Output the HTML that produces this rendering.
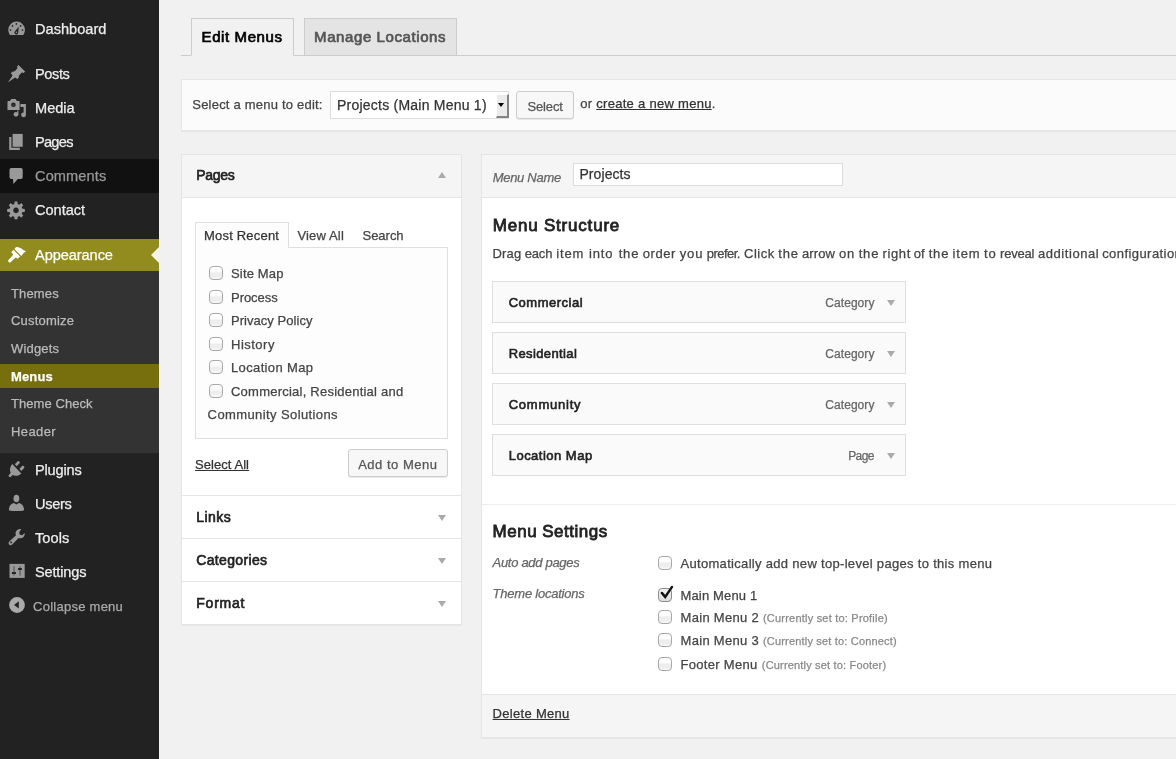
<!DOCTYPE html>
<html lang="en">
<head>
<meta charset="utf-8">
<title>Menus</title>
<style>
*{box-sizing:border-box;margin:0;padding:0}
html,body{width:1176px;height:759px;overflow:hidden;background:#f1f1f1;font-family:"Liberation Sans",sans-serif;font-size:13px;color:#444}
.abs{position:absolute}
.t{position:absolute;white-space:nowrap;-webkit-text-stroke:0.25px}
#txt{position:absolute;left:0;top:0;width:1176px;height:759px;overflow:hidden;will-change:transform}
#side{position:absolute;left:0;top:0;width:159px;height:759px;background:#222}
.box{position:absolute;background:#fff;border:1px solid #e5e5e5;box-shadow:0 1px 1px rgba(0,0,0,.04)}
.cb{position:absolute;width:14px;height:14px;border:1px solid #a8a8a8;border-radius:4px;background:linear-gradient(#fff 0%,#fdfdfd 35%,#ececec 55%,#efefef 80%,#fafafa 100%)}
.item{position:absolute;left:492px;width:414px;height:42px;background:#fafafa;border:1px solid #dfdfdf}
.arr{position:absolute;width:0;height:0;border-left:4px solid transparent;border-right:4px solid transparent}
.btn{position:absolute;border:1px solid #ccc;border-radius:3px;background:#f7f7f7;box-shadow:0 1px 0 rgba(0,0,0,.08)}
a{color:#333;text-decoration:underline}
</style>
</head>
<body>
<div id="side">
<div class="abs" style="left:0;top:159px;width:159px;height:34px;background:#111"></div>
<div class="abs" style="left:0;top:239px;width:159px;height:32px;background:#928b1d"></div>
<div class="abs" style="left:151px;top:247px;width:0;height:0;border-top:8px solid transparent;border-bottom:8px solid transparent;border-right:8px solid #f4f3e8"></div>
<div class="abs" style="left:0;top:271px;width:159px;height:182px;background:#333"></div>
<div class="abs" style="left:0;top:364px;width:159px;height:24px;background:#776f0d"></div>
<svg class="abs" style="left:0;top:0" width="159" height="759" viewBox="0 0 159 759">
<g fill="#999">
<!-- dashboard -->
<path d="M9.9 35.1 C8.9 33.6 8.3 31.8 8.3 29.8 A8.3 8.3 0 0 1 24.9 29.8 C24.9 31.8 24.3 33.6 23.3 35.1Z"/>
<g fill="#222"><circle cx="10.5" cy="30" r=".85"/><circle cx="12.5" cy="25.9" r=".85"/><circle cx="16.4" cy="23.9" r=".85"/><circle cx="20.6" cy="25.9" r=".85"/><circle cx="22.5" cy="30" r=".85"/>
<path d="M18.8 26.6 L18.2 32.6 A1.9 1.9 0 1 1 15 31.2Z"/></g>
<circle cx="16.4" cy="32.2" r=".8"/>
<!-- posts pin -->
<path d="M7.9 82.4 L12.6 75.6 L10.9 73.2 L12.3 71.8 Q14 71.8 15 71 L17.4 68.3 Q17.6 67.3 17 66.5 L18.4 65.1 L25.1 71.6 L23.7 73 Q22.8 72.4 21.9 72.6 L19.4 75 Q18.6 76.2 18.8 77.4 L17.4 78.9 L15 77.5Z"/>
<!-- media -->
<path d="M7.5 101.6 Q7.5 100.9 8.2 100.9 L10 100.9 L11.3 98.9 L15.6 98.9 L16.9 100.9 L18.9 100.9 Q19.6 100.9 19.6 101.6 L19.6 110 L7.5 110Z"/>
<circle cx="13.4" cy="104.8" r="2.3" fill="#222"/><circle cx="13.4" cy="104.8" r=".9" fill="#444"/>
<path d="M20.4 103.9 L25.9 103.9 L25.9 114.9 A2.4 2.4 0 1 1 23.6 112.5 L23.6 107 L20.4 107Z"/>
<circle cx="16" cy="114.3" r="2.4"/><path d="M17.4 110.5 L18.4 110.5 L18.4 114.3 L17 114.3Z"/>
<!-- pages -->
<rect x="12.6" y="133.9" width="10.1" height="12.9"/>
<path d="M9.2 137 L11.4 137 L11.4 147.8 L19.8 147.8 L19.8 149.9 L9.2 149.9Z"/>
<!-- comments -->
<path d="M11.3 167.9 L20.9 167.9 Q22.7 167.9 22.7 169.7 L22.7 177.2 Q22.7 179 20.9 179 L17.8 179 L13.4 183.9 L13 179 L11.3 179 Q9.5 179 9.5 177.2 L9.5 169.7 Q9.5 167.9 11.3 167.9Z"/>
<!-- gear -->
<path fill-rule="evenodd" d="M14.4 203.9 L14.5 201.6 L17.5 201.6 L17.6 203.9 L19.4 204.7 L21.2 203.1 L23.3 205.2 L21.7 207.0 L22.5 208.8 L24.8 208.9 L24.8 211.9 L22.5 212.0 L21.7 213.8 L23.3 215.6 L21.2 217.7 L19.4 216.1 L17.6 216.9 L17.5 219.2 L14.5 219.2 L14.4 216.9 L12.6 216.1 L10.8 217.7 L8.7 215.6 L10.3 213.8 L9.5 212.0 L7.2 211.9 L7.2 208.9 L9.5 208.8 L10.3 207.0 L8.7 205.2 L10.8 203.1 L12.6 204.7Z M16 207.6 a2.8 2.8 0 1 0 0.01 0Z"/>
<!-- plugins -->
<path d="M12.3 464.1 L21.3 473.4 C19 475.8 15.4 476.4 12.6 475 L10.9 476.7 A1.3 1.3 0 0 1 9 474.8 L10.7 473.1 C9.3 470.3 9.9 466.6 12.3 464.1Z"/>
<path d="M14.8 464.3 L17.6 461.2 Q18.6 460.8 19.4 461.6 Q20.1 462.5 19.6 463.3 L16.8 466.3Z"/>
<path d="M19.4 468.9 L22.2 465.8 Q23.2 465.4 24 466.2 Q24.7 467.1 24.2 467.9 L21.4 470.9Z"/>
<!-- users -->
<ellipse cx="16.4" cy="498.5" rx="2.9" ry="3.75"/>
<path d="M8.9 510.2 C8.9 505.5 11.4 503.6 14 502.9 L16.4 504.6 L18.8 502.9 C21.5 503.6 24.1 505.5 24.1 510.2 C20 511.4 13 511.4 8.9 510.2Z"/>
<!-- tools -->
<path fill-rule="evenodd" d="M21.3 529 C19 528.6 16.6 529.6 15.8 531.8 C15.4 533 15.5 534.2 16 535.2 L9.3 541.4 A2 2 0 0 0 12.2 544.6 L18.6 538 C19.6 538.4 20.8 538.4 22 538 C24 537.2 25 535 24.7 532.9 L22.2 535.3 L19.8 534.7 L19.2 532.3Z M11.1 541.5 a.9 .9 0 1 0 .01 0Z"/>
<!-- settings -->
<rect x="9.5" y="563.9" width="15.2" height="14" />
<rect x="13.2" y="566.3" width="1.6" height="9.3" fill="#6a6a6a"/><rect x="19.2" y="566.3" width="1.7" height="9.3" fill="#6a6a6a"/>
<rect x="11.9" y="572" width="4.1" height="2" rx=".5" fill="#222"/><rect x="18" y="568" width="3.9" height="2" rx=".5" fill="#222"/>
</g>
<!-- appearance brush -->
<g fill="#fff">
<path d="M8.4 260 L12.6 255.6 L15 258 L10.6 262.2 A1.6 1.6 0 0 1 8.4 260Z"/>
<path d="M11.1 252 L13.6 250.1 L20.1 256.5 L17.6 258.8 L15.8 257.4 L14.6 258.4 L12.2 256 L13.2 254.6Z"/>
<path d="M14.4 249 C15 248 16 247.2 17 247.1 C20 247.3 22.6 249.6 25.9 251.4 C24 252.2 22.8 254 21.3 255.9Z"/>
</g>
<!-- collapse -->
<circle cx="17" cy="605" r="7.9" fill="#aaa"/>
<path d="M14 604.9 L18.8 601.3 L18.8 608.6Z" fill="#222"/>
</svg>
</div>
<!-- tabs -->
<div class="abs" style="left:181px;top:55px;width:995px;height:1px;background:#ccc"></div>
<div class="abs" style="left:191px;top:18px;width:103px;height:38px;border:1px solid #ccc;border-bottom:1px solid #f1f1f1;background:#f1f1f1"></div>
<div class="abs" style="left:304px;top:18px;width:153px;height:38px;border:1px solid #ccc;background:#e4e4e4"></div>
<!-- select bar -->
<div class="box" style="left:181px;top:79px;width:1000px;height:52px;background:#fbfbfb"></div>
<div class="abs" style="left:330px;top:91px;width:179px;height:28px;border:1px solid #ddd;background:#fff"></div>
<div class="abs" style="left:496px;top:94px;width:13px;height:24px;background:#ebebeb;border-top:1px solid #fff;border-left:1px solid #fff;border-right:2px solid #848484;border-bottom:2px solid #848484"></div>
<div class="arr" style="left:498px;top:103px;border-left-width:3px;border-right-width:3px;border-top:4px solid #000"></div>
<div class="btn" style="left:516px;top:91px;width:58px;height:28px"></div>
<!-- left accordion -->
<div class="box" style="left:181px;top:154px;width:281px;height:471px"></div>
<div class="abs" style="left:182px;top:155px;width:279px;height:42px;background:#f5f5f5"></div>
<div class="abs" style="left:182px;top:197px;width:279px;height:1px;background:#e5e5e5"></div>
<div class="arr" style="left:438px;top:172px;border-bottom:6px solid #aaa"></div>
<div class="abs" style="left:195px;top:247px;width:253px;height:192px;border:1px solid #dfdfdf;background:#fdfdfd"></div>
<div class="abs" style="left:195px;top:222px;width:94px;height:26px;border:1px solid #dfdfdf;border-bottom:none;background:#fdfdfd"></div>
<div class="cb" style="left:209px;top:266px"></div>
<div class="cb" style="left:209px;top:290px"></div>
<div class="cb" style="left:209px;top:313px"></div>
<div class="cb" style="left:209px;top:337px"></div>
<div class="cb" style="left:209px;top:360px"></div>
<div class="cb" style="left:209px;top:384px"></div>
<div class="btn" style="left:348px;top:449px;width:100px;height:28px"></div>
<div class="abs" style="left:182px;top:495px;width:279px;height:1px;background:#e5e5e5"></div>
<div class="arr" style="left:438px;top:515px;border-top:6px solid #aaa"></div>
<div class="abs" style="left:182px;top:538px;width:279px;height:1px;background:#e5e5e5"></div>
<div class="arr" style="left:438px;top:558px;border-top:6px solid #aaa"></div>
<div class="abs" style="left:182px;top:581px;width:279px;height:1px;background:#e5e5e5"></div>
<div class="arr" style="left:438px;top:601px;border-top:6px solid #aaa"></div>
<!-- right panel -->
<div class="box" style="left:481px;top:154px;width:700px;height:584px"></div>
<div class="abs" style="left:482px;top:155px;width:694px;height:42px;background:#f5f5f5"></div>
<div class="abs" style="left:482px;top:197px;width:694px;height:1px;background:#e5e5e5"></div>
<div class="abs" style="left:573px;top:163px;width:270px;height:23px;border:1px solid #ddd;background:#fff"></div>
<div class="item" style="top:281px"></div><div class="arr" style="left:887px;top:300px;border-top:6px solid #aaa"></div>
<div class="item" style="top:332px"></div><div class="arr" style="left:887px;top:351px;border-top:6px solid #aaa"></div>
<div class="item" style="top:383px"></div><div class="arr" style="left:887px;top:402px;border-top:6px solid #aaa"></div>
<div class="item" style="top:434px"></div><div class="arr" style="left:887px;top:453px;border-top:6px solid #aaa"></div>
<div class="abs" style="left:482px;top:504px;width:694px;height:1px;background:#eee"></div>
<div class="cb" style="left:658px;top:556px"></div>
<div class="cb" style="left:658px;top:588px;border-color:#8c8c8c;background:linear-gradient(#f4f4f4,#dcdcdc)"></div>
<svg class="abs" style="left:656px;top:584px" width="20" height="20" viewBox="0 0 20 20"><path d="M5.8 8.9 L9.2 12.9 L16 2.9" fill="none" stroke="#111" stroke-width="2.4" stroke-linecap="round" stroke-linejoin="miter"/></svg>
<div class="cb" style="left:658px;top:610px"></div>
<div class="cb" style="left:658px;top:633px"></div>
<div class="cb" style="left:658px;top:657px"></div>
<div class="abs" style="left:482px;top:694px;width:694px;height:43px;background:#f5f5f5;border-top:1px solid #e5e5e5"></div>
<div id="txt">
<div class="t" style="left:35px;top:20px;font-size:14.6px;color:#eee;line-height:18px;letter-spacing:0.01px;">Dashboard</div>
<div class="t" style="left:35px;top:65px;font-size:14.6px;color:#eee;line-height:18px;letter-spacing:-0.40px;">Posts</div>
<div class="t" style="left:35px;top:99px;font-size:14.6px;color:#eee;line-height:18px;letter-spacing:-0.01px;">Media</div>
<div class="t" style="left:34.9px;top:133px;font-size:14.6px;color:#eee;line-height:18px;letter-spacing:-0.70px;">Pages</div>
<div class="t" style="left:35px;top:167px;font-size:14.6px;color:#eee;line-height:18px;color:#999;letter-spacing:0.09px;">Comments</div>
<div class="t" style="left:35px;top:201px;font-size:14.6px;color:#eee;line-height:18px;letter-spacing:-0.03px;">Contact</div>
<div class="t" style="left:35px;top:246px;font-size:14.6px;color:#eee;line-height:18px;color:#fff;letter-spacing:-0.08px;">Appearance</div>
<div class="t" style="left:11px;top:285px;font-size:13px;color:#bbb;line-height:18px;letter-spacing:0.15px;">Themes</div>
<div class="t" style="left:11px;top:312px;font-size:13px;color:#bbb;line-height:18px;letter-spacing:0.20px;">Customize</div>
<div class="t" style="left:11px;top:340px;font-size:13px;color:#bbb;line-height:18px;letter-spacing:0.17px;">Widgets</div>
<div class="t" style="left:11px;top:368px;font-size:13px;color:#bbb;line-height:18px;color:#fff;font-weight:bold;letter-spacing:0.13px;">Menus</div>
<div class="t" style="left:11px;top:395px;font-size:13px;color:#bbb;line-height:18px;letter-spacing:0.06px;">Theme Check</div>
<div class="t" style="left:11px;top:423px;font-size:13px;color:#bbb;line-height:18px;letter-spacing:0.39px;">Header</div>
<div class="t" style="left:35px;top:461px;font-size:14.6px;color:#eee;line-height:18px;letter-spacing:-0.18px;">Plugins</div>
<div class="t" style="left:35px;top:495px;font-size:14.6px;color:#eee;line-height:18px;letter-spacing:-0.30px;">Users</div>
<div class="t" style="left:35px;top:529px;font-size:14.6px;color:#eee;line-height:18px;letter-spacing:0.06px;">Tools</div>
<div class="t" style="left:35px;top:563px;font-size:14.6px;color:#eee;line-height:18px;letter-spacing:-0.18px;">Settings</div>
<div class="t" style="left:33px;top:598px;font-size:13px;color:#aaa;line-height:18px;letter-spacing:0.26px;">Collapse menu</div>
<div class="t" style="left:201.6px;top:28px;font-size:15px;-webkit-text-stroke:0.7px #000;color:#000;line-height:18px;letter-spacing:0.59px;">Edit Menus</div>
<div class="t" style="left:314.1px;top:28px;font-size:15px;-webkit-text-stroke:0.7px #555;color:#555;line-height:18px;letter-spacing:0.59px;">Manage Locations</div>
<div class="t" style="left:192.3px;top:97px;line-height:16px;letter-spacing:0.21px;">Select a menu to edit:</div>
<div class="t" style="left:337px;top:96px;font-size:14px;color:#333;line-height:18px;letter-spacing:0.23px;">Projects (Main Menu 1)</div>
<div class="t" style="left:527.5px;top:99px;line-height:16px;color:#555;letter-spacing:-0.15px;">Select</div>
<div class="t" style="left:580.2px;top:96px;line-height:16px;letter-spacing:0.29px;">or <a>create a new menu</a>.</div>
<div class="t" style="left:196.3px;top:167px;font-size:14px;-webkit-text-stroke:0.65px #222;color:#222;line-height:16px;letter-spacing:-0.28px;">Pages</div>
<div class="t" style="left:204px;top:228px;line-height:16px;color:#333;letter-spacing:0.20px;">Most Recent</div>
<div class="t" style="left:297.5px;top:228px;line-height:16px;letter-spacing:0.14px;">View All</div>
<div class="t" style="left:362.5px;top:228px;line-height:16px;letter-spacing:-0.02px;">Search</div>
<div class="t" style="left:231px;top:266px;line-height:16px;letter-spacing:0.16px;">Site Map</div>
<div class="t" style="left:231px;top:290px;line-height:16px;letter-spacing:-0.04px;">Process</div>
<div class="t" style="left:231px;top:313px;line-height:16px;letter-spacing:0.04px;">Privacy Policy</div>
<div class="t" style="left:231px;top:337px;line-height:16px;letter-spacing:0.49px;">History</div>
<div class="t" style="left:231px;top:360px;line-height:16px;letter-spacing:0.36px;">Location Map</div>
<div class="t" style="left:231px;top:384px;line-height:16px;letter-spacing:0.23px;">Commercial, Residential and</div>
<div class="t" style="left:207.6px;top:407px;line-height:16px;letter-spacing:0.40px;">Community Solutions</div>
<div class="t" style="left:195px;top:457px;line-height:16px;letter-spacing:0.06px;"><a>Select All</a></div>
<div class="t" style="left:358.2px;top:457px;line-height:16px;color:#555;letter-spacing:0.51px;">Add to Menu</div>
<div class="t" style="left:196.3px;top:509px;font-size:14px;-webkit-text-stroke:0.65px #222;color:#222;line-height:16px;letter-spacing:0.43px;">Links</div>
<div class="t" style="left:196.3px;top:552px;font-size:14px;-webkit-text-stroke:0.65px #222;color:#222;line-height:16px;letter-spacing:0.34px;">Categories</div>
<div class="t" style="left:196.3px;top:595px;font-size:14px;-webkit-text-stroke:0.65px #222;color:#222;line-height:16px;letter-spacing:0.77px;">Format</div>
<div class="t" style="left:492.7px;top:170px;font-style:italic;color:#666;line-height:16px;letter-spacing:-0.29px;">Menu Name</div>
<div class="t" style="left:579.4px;top:165px;font-size:14px;color:#333;line-height:18px;letter-spacing:0.09px;">Projects</div>
<div class="t" style="left:492.7px;top:216px;font-size:17px;-webkit-text-stroke:0.8px #222;color:#222;line-height:20px;letter-spacing:0.80px;">Menu Structure</div>
<div class="t" style="left:492.5px;top:246px;line-height:16px;letter-spacing:0.17px;">Drag</div>
<div class="t" style="left:524.7px;top:246px;line-height:16px;letter-spacing:-0.17px;">each</div>
<div class="t" style="left:556.3px;top:246px;line-height:16px;letter-spacing:0.80px;">item</div>
<div class="t" style="left:589.1px;top:246px;line-height:16px;letter-spacing:0.80px;">into</div>
<div class="t" style="left:618.7px;top:246px;line-height:16px;letter-spacing:0.80px;">the</div>
<div class="t" style="left:642.8px;top:246px;line-height:16px;letter-spacing:0.56px;">order</div>
<div class="t" style="left:679.8px;top:246px;line-height:16px;letter-spacing:0.80px;">you</div>
<div class="t" style="left:706.8px;top:246px;line-height:16px;letter-spacing:-0.53px;">prefer.</div>
<div class="t" style="left:744px;top:246px;line-height:16px;letter-spacing:0.51px;">Click</div>
<div class="t" style="left:778.3px;top:246px;line-height:16px;letter-spacing:0.80px;">the</div>
<div class="t" style="left:802px;top:246px;line-height:16px;letter-spacing:0.12px;">arrow</div>
<div class="t" style="left:838.9px;top:246px;line-height:16px;letter-spacing:0.80px;">on</div>
<div class="t" style="left:858.7px;top:246px;line-height:16px;letter-spacing:0.80px;">the</div>
<div class="t" style="left:882.5px;top:246px;line-height:16px;letter-spacing:0.63px;">right</div>
<div class="t" style="left:913.8px;top:246px;line-height:16px;letter-spacing:-0.04px;">of</div>
<div class="t" style="left:928.7px;top:246px;line-height:16px;letter-spacing:0.80px;">the</div>
<div class="t" style="left:952.6px;top:246px;line-height:16px;letter-spacing:0.80px;">item</div>
<div class="t" style="left:984px;top:246px;line-height:16px;letter-spacing:0.80px;">to</div>
<div class="t" style="left:1000.1px;top:246px;line-height:16px;letter-spacing:-0.22px;">reveal</div>
<div class="t" style="left:1037.9px;top:246px;line-height:16px;letter-spacing:0.57px;">additional</div>
<div class="t" style="left:1102.2px;top:246px;line-height:16px;letter-spacing:0.43px;">configuration options.</div>
<div class="t" style="left:508.7px;top:295px;font-size:13px;color:#222;line-height:16px;-webkit-text-stroke:0.6px #222;letter-spacing:0.51px;">Commercial</div>
<div class="t" style="left:825.3px;top:295px;font-size:12px;color:#666;line-height:16px;letter-spacing:0.06px;">Category</div>
<div class="t" style="left:508.7px;top:346px;font-size:13px;color:#222;line-height:16px;-webkit-text-stroke:0.6px #222;letter-spacing:0.38px;">Residential</div>
<div class="t" style="left:825.3px;top:346px;font-size:12px;color:#666;line-height:16px;letter-spacing:0.06px;">Category</div>
<div class="t" style="left:508.7px;top:397px;font-size:13px;color:#222;line-height:16px;-webkit-text-stroke:0.6px #222;letter-spacing:0.77px;">Community</div>
<div class="t" style="left:825.3px;top:397px;font-size:12px;color:#666;line-height:16px;letter-spacing:0.06px;">Category</div>
<div class="t" style="left:508.7px;top:448px;font-size:13px;color:#222;line-height:16px;-webkit-text-stroke:0.6px #222;letter-spacing:0.49px;">Location Map</div>
<div class="t" style="left:848.2px;top:448px;font-size:12px;color:#666;line-height:16px;letter-spacing:-0.61px;">Page</div>
<div class="t" style="left:492.6px;top:522px;font-size:17px;-webkit-text-stroke:0.8px #222;color:#222;line-height:20px;letter-spacing:0.49px;">Menu Settings</div>
<div class="t" style="left:492.6px;top:555px;font-style:italic;color:#666;line-height:16px;letter-spacing:-0.31px;">Auto add pages</div>
<div class="t" style="left:680.5px;top:556px;line-height:16px;letter-spacing:0.31px;">Automatically add new top-level pages to this menu</div>
<div class="t" style="left:492.6px;top:586px;font-style:italic;color:#666;line-height:16px;letter-spacing:-0.23px;">Theme locations</div>
<div class="t" style="left:680.5px;top:588px;line-height:16px;letter-spacing:0.15px;">Main Menu 1</div>
<div class="t" style="left:680.5px;top:610px;line-height:16px;letter-spacing:0.31px;">Main Menu 2</div>
<div class="t" style="left:763px;top:610px;font-size:11px;color:#888;line-height:16px;letter-spacing:0.21px;">(Currently set to: Profile)</div>
<div class="t" style="left:680.5px;top:633px;line-height:16px;letter-spacing:0.31px;">Main Menu 3</div>
<div class="t" style="left:763px;top:633px;font-size:11px;color:#888;line-height:16px;letter-spacing:0.18px;">(Currently set to: Connect)</div>
<div class="t" style="left:680.5px;top:657px;line-height:16px;letter-spacing:0.30px;">Footer Menu</div>
<div class="t" style="left:761.8px;top:657px;font-size:11px;color:#888;line-height:16px;letter-spacing:0.18px;">(Currently set to: Footer)</div>
<div class="t" style="left:492.6px;top:706px;line-height:16px;letter-spacing:0.30px;"><a>Delete Menu</a></div>
</div>
</body>
</html>
